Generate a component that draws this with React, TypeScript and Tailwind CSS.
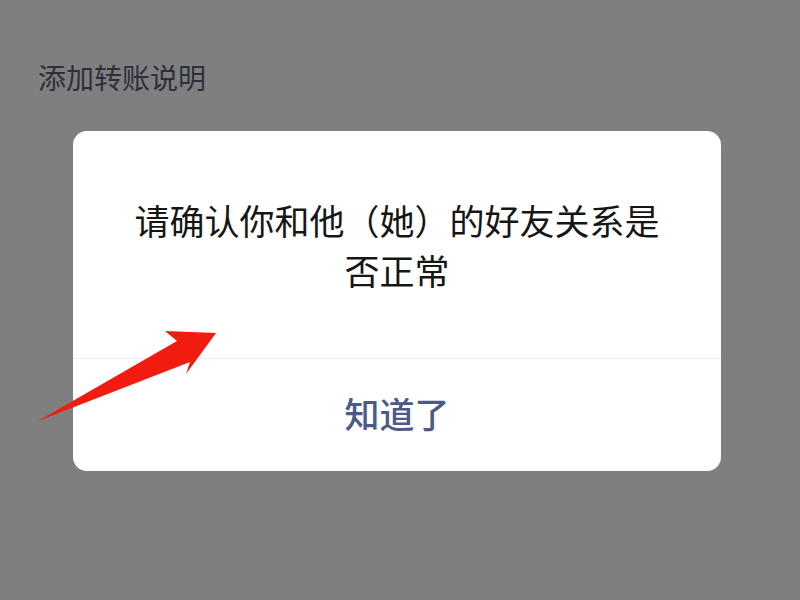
export default function App() {
  return (
    <div
      className="relative h-[600px] w-[800px] overflow-hidden bg-[#7f7f7f]"
      style={{ fontFamily: '"Noto Sans CJK SC", "Noto Sans", sans-serif' }}
    >
      {/* Page behind the dimmed overlay */}
      <div className="pl-[38px] pt-[61px] text-[28px] leading-[32px] text-[#2c303c]">
        添加转账说明
      </div>

      {/* Dialog */}
      <div className="ml-[73px] mr-[79px] mt-[38px] h-[340px] flex flex-col rounded-[14px] bg-white">
        <div className="flex-1 px-[52px] pt-[64px] text-center text-[35px] leading-[50px] text-[#161616]">
          请确认你和他（她）的好友关系是否正常
        </div>
        <div className="h-[113px] flex items-center justify-center border-t border-[#ececec] pb-[4px] text-[35px] font-medium text-[#4b5a86]">
          知道了
        </div>
      </div>

      {/* Annotation arrow */}
      <svg
        className="absolute left-0 top-0"
        width="800"
        height="600"
        viewBox="0 0 800 600"
      >
        <polygon
          points="38,421 177,341 165,331 216,333 186,374 190,362"
          fill="#f21b10"
        />
      </svg>
    </div>
  )
}
